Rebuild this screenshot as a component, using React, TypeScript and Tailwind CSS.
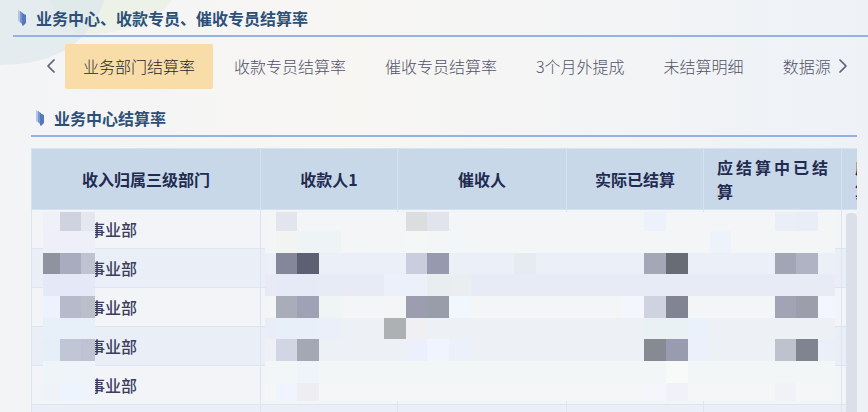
import type { ReactNode } from "react";
import { ChevronLeft, ChevronRight } from "lucide-react";

type Block = { col: number; row: number; fill: string };

const TABS = ["业务部门结算率", "收款专员结算率", "催收专员结算率", "3个月外提成", "未结算明细", "数据源"];

const COLUMNS = [
	{ label: "收入归属三级部门", width: "w-[229px]" },
	{ label: "收款人1", width: "w-[137px]" },
	{ label: "催收人", width: "w-[169px]" },
	{ label: "实际已结算", width: "w-[137px]" },
	{ label: "应结算中已结算", width: "w-[138px]", wrap: true },
	{ label: "应结算中未结算", width: "w-[138px]", wrap: true },
];

const ROWS = ["事业部", "事业部", "事业部", "事业部", "事业部", ""];

// Redaction grid, measured from the top left corner of the table
const NAME_X = [12, 29, 50, 64];
const DATA_X = [
	234, 245, 266, 288, 310, 332, 353, 375, 396, 418, 440, 461, 483, 505, 527, 548, 570, 591, 613, 635, 657, 679, 700,
	722, 744, 765, 787, 804,
];
const GRID_Y = [64, 83, 105, 126, 148, 170, 191, 213, 235, 253];

const NAME_BANDS = ["#f0f1f8", "#eeeff8", "#e9ecf7", "#e5e8f6", "#edf2fc", "#e7eff8", "#e6eef8", "#eef4f8", "#eff3f7"];
const DATA_BANDS = ["#f4f5f7", "#f3f5f6", "#ebeff8", "#e8ebf5", "#f3f5f6", "#edf0f5", "#edf1f6", "#f3f6f6", "#f4f6f7"];

const NAME_BLOCKS: Block[] = [
	{ col: 1, row: 0, fill: "#cfd2df" },
	{ col: 2, row: 0, fill: "#e4e6f0" },
	{ col: 0, row: 2, fill: "#8e939f" },
	{ col: 1, row: 2, fill: "#a9abbf" },
	{ col: 2, row: 2, fill: "#bfc2d0" },
	{ col: 1, row: 4, fill: "#b7bacb" },
	{ col: 2, row: 4, fill: "#babfca" },
	{ col: 1, row: 6, fill: "#c1c6d6" },
	{ col: 2, row: 6, fill: "#bdc3d2" },
	{ col: 1, row: 8, fill: "#eef4fd" },
	{ col: 2, row: 8, fill: "#eff4fc" },
];

const DATA_BLOCKS: Block[] = [
	{ col: 1, row: 0, fill: "#e2e5ed" },
	{ col: 7, row: 0, fill: "#dcddde" },
	{ col: 8, row: 0, fill: "#e1e4ec" },
	{ col: 18, row: 0, fill: "#edf1fb" },
	{ col: 24, row: 0, fill: "#e9eef7" },
	{ col: 25, row: 0, fill: "#e8edf7" },
	{ col: 1, row: 1, fill: "#f1f4f0" },
	{ col: 2, row: 1, fill: "#eef3f5" },
	{ col: 3, row: 1, fill: "#eef3f5" },
	{ col: 7, row: 1, fill: "#f3f7f5" },
	{ col: 9, row: 1, fill: "#f2f6f8" },
	{ col: 21, row: 1, fill: "#edf2fb" },
	{ col: 1, row: 2, fill: "#84869a" },
	{ col: 2, row: 2, fill: "#5d6072" },
	{ col: 7, row: 2, fill: "#cacddd" },
	{ col: 8, row: 2, fill: "#9799ae" },
	{ col: 12, row: 2, fill: "#e6eaf1" },
	{ col: 18, row: 2, fill: "#a4a7b5" },
	{ col: 19, row: 2, fill: "#686c75" },
	{ col: 24, row: 2, fill: "#a2a5b4" },
	{ col: 25, row: 2, fill: "#b0b3c3" },
	{ col: 1, row: 3, fill: "#e6e9f6" },
	{ col: 2, row: 3, fill: "#e6e9f6" },
	{ col: 6, row: 3, fill: "#ecf0fa" },
	{ col: 7, row: 3, fill: "#ecf0f9" },
	{ col: 8, row: 3, fill: "#e8edef" },
	{ col: 9, row: 3, fill: "#eaeef0" },
	{ col: 1, row: 4, fill: "#a9adba" },
	{ col: 2, row: 4, fill: "#a0a1b4" },
	{ col: 3, row: 4, fill: "#eff4f5" },
	{ col: 7, row: 4, fill: "#9c9eaf" },
	{ col: 8, row: 4, fill: "#999da9" },
	{ col: 9, row: 4, fill: "#f1f7ff" },
	{ col: 17, row: 4, fill: "#f4f6fd" },
	{ col: 18, row: 4, fill: "#ced3df" },
	{ col: 19, row: 4, fill: "#828493" },
	{ col: 24, row: 4, fill: "#a2a4b5" },
	{ col: 25, row: 4, fill: "#9c9eab" },
	{ col: 26, row: 4, fill: "#f3f6fe" },
	{ col: 6, row: 5, fill: "#adb1b4" },
	{ col: 7, row: 5, fill: "#f0eff1" },
	{ col: 0, row: 5, fill: "#e9edf8" },
	{ col: 1, row: 5, fill: "#e9eff8" },
	{ col: 2, row: 5, fill: "#e9eff8" },
	{ col: 3, row: 5, fill: "#ebeffa" },
	{ col: 18, row: 5, fill: "#eaf1f4" },
	{ col: 19, row: 5, fill: "#eaf1f4" },
	{ col: 20, row: 5, fill: "#eaf1fa" },
	{ col: 1, row: 6, fill: "#d1d5e4" },
	{ col: 2, row: 6, fill: "#a4a8b4" },
	{ col: 7, row: 6, fill: "#ecf0fc" },
	{ col: 8, row: 6, fill: "#f0f4ff" },
	{ col: 9, row: 6, fill: "#ecf0fb" },
	{ col: 18, row: 6, fill: "#878a92" },
	{ col: 19, row: 6, fill: "#999bb0" },
	{ col: 20, row: 6, fill: "#ebf0fa" },
	{ col: 24, row: 6, fill: "#bec2cc" },
	{ col: 25, row: 6, fill: "#808490" },
	{ col: 26, row: 6, fill: "#ebeff8" },
	{ col: 2, row: 7, fill: "#eff4fa" },
	{ col: 19, row: 7, fill: "#f7faf8" },
	{ col: 1, row: 8, fill: "#f0f4fe" },
	{ col: 2, row: 8, fill: "#eeedf2" },
	{ col: 18, row: 8, fill: "#f4f6fb" },
	{ col: 19, row: 8, fill: "#f1f2f9" },
	{ col: 24, row: 8, fill: "#f1f2f8" },
];

function Mosaic({ xs, bands, blocks }: { xs: number[]; bands: string[]; blocks: Block[] }) {
	const left = xs[0];
	const right = xs[xs.length - 1];

	return (
		<g shapeRendering="crispEdges">
			{bands.map((fill, i) => (
				<rect key={i} x={left} y={GRID_Y[i]} width={right - left} height={GRID_Y[i + 1] - GRID_Y[i]} fill={fill} />
			))}
			{blocks.map(({ col, row, fill }) => (
				<rect
					key={`${col}-${row}`}
					x={xs[col]}
					y={GRID_Y[row]}
					width={xs[col + 1] - xs[col]}
					height={GRID_Y[row + 1] - GRID_Y[row]}
					fill={fill}
				/>
			))}
		</g>
	);
}

function Backdrop() {
	return (
		<svg className="absolute left-0 top-0 -z-10" width="200" height="80" aria-hidden="true">
			<path d="M60 0H172Q150 32 82 35Z" fill="#edf2e8" />
			<path d="M0 0H104C98 24 75 58 20 64L0 65Z" fill="#e5ecf0" />
			<path d="M50 0H104Q98 20 82 35Q56 22 50 0Z" fill="#e0eaea" />
		</svg>
	);
}

function Marker() {
	return (
		<svg width="8" height="16" viewBox="0 0 8 16" aria-hidden="true">
			<path d="M0 0L3 2V13L0 11Z" fill="#b3c5e6" />
			<path d="M2 1L5 3V15L2 12Z" fill="#7796d1" />
			<path d="M4 3L8 5V13L5 16L4 15Z" fill="#5479ba" />
		</svg>
	);
}

function SectionTitle({ children }: { children: ReactNode }) {
	return (
		<div className="flex h-9 items-center gap-2.5 border-b-2 border-[#94b2e2] pl-[5px]">
			<Marker />
			<h2 className="text-[16px] leading-6 font-bold text-[#2d5078]">{children}</h2>
		</div>
	);
}

export default function App() {
	return (
		<main className="relative isolate h-screen overflow-hidden bg-linear-to-r from-[#f3f4f6] via-[#f7f6f3] via-40% to-[#eef2f7] font-['Noto_Sans_CJK_SC','Noto_Sans',sans-serif]">
			<Backdrop />
			<div className="pt-px pl-[13px]">
				<SectionTitle>业务中心、收款专员、催收专员结算率</SectionTitle>
			</div>

			<nav className="mt-[7px] mr-[13px] ml-[39px] flex items-center">
				<button type="button" aria-label="向左" className="w-[26px] shrink-0 pb-0.5 text-[#5d6075]">
					<ChevronLeft className="h-6 w-6" strokeWidth={1.75} />
				</button>
				<div className="flex min-w-0 flex-1 gap-[3px] overflow-hidden">
					{TABS.map((tab, i) => (
						<button
							key={tab}
							type="button"
							className={`h-[45px] shrink-0 rounded-xs px-[18px] pb-0.5 text-[16px] leading-6 font-light whitespace-nowrap ${
								i === 0 ? "bg-[#f9dda9] text-[#25252e]" : "text-[#525368]"
							}`}
						>
							{tab}
						</button>
					))}
				</div>
				<button type="button" aria-label="向右" className="w-6 shrink-0 pb-0.5 text-[#5d6075]">
					<ChevronRight className="h-6 w-6" strokeWidth={1.75} />
				</button>
			</nav>

			<section className="mt-3 mr-[11px] ml-[31px]">
				<SectionTitle>业务中心结算率</SectionTitle>

				<div className="relative mt-[11px] overflow-hidden">
					<table className="w-[948px] table-fixed border-collapse text-[16px] leading-6">
						<thead>
							<tr className="h-[61px] bg-[#c9d8e9] text-[#1f2b50]">
								{COLUMNS.map((col) => (
									<th
										key={col.label}
										className={`border border-[#d5e2f0] font-bold ${col.width} ${
											col.wrap ? "px-[13px] text-justify" : "text-center"
										}`}
									>
										{col.label}
									</th>
								))}
							</tr>
						</thead>
						<tbody className="text-[#3b3d5c]">
							{ROWS.map((name, i) => (
								<tr key={i} className="h-[39px] odd:bg-[#f3f4f7] even:bg-[#e9eef7]">
									<td className="border border-[#dde5f2] pl-[57px] font-medium">{name}</td>
									{COLUMNS.slice(1).map((col) => (
										<td key={col.label} className="border border-[#dde5f2]" />
									))}
								</tr>
							))}
						</tbody>
					</table>

					<svg className="absolute top-0 left-0" width="826" height="264" aria-hidden="true">
						<Mosaic xs={NAME_X} bands={NAME_BANDS} blocks={NAME_BLOCKS} />
						<Mosaic xs={DATA_X} bands={DATA_BANDS} blocks={DATA_BLOCKS} />
					</svg>
					<div className="absolute top-[65px] right-0 bottom-0 w-[11px] rounded-t-sm bg-[#dbdfe8]" />
				</div>
			</section>
		</main>
	);
}
